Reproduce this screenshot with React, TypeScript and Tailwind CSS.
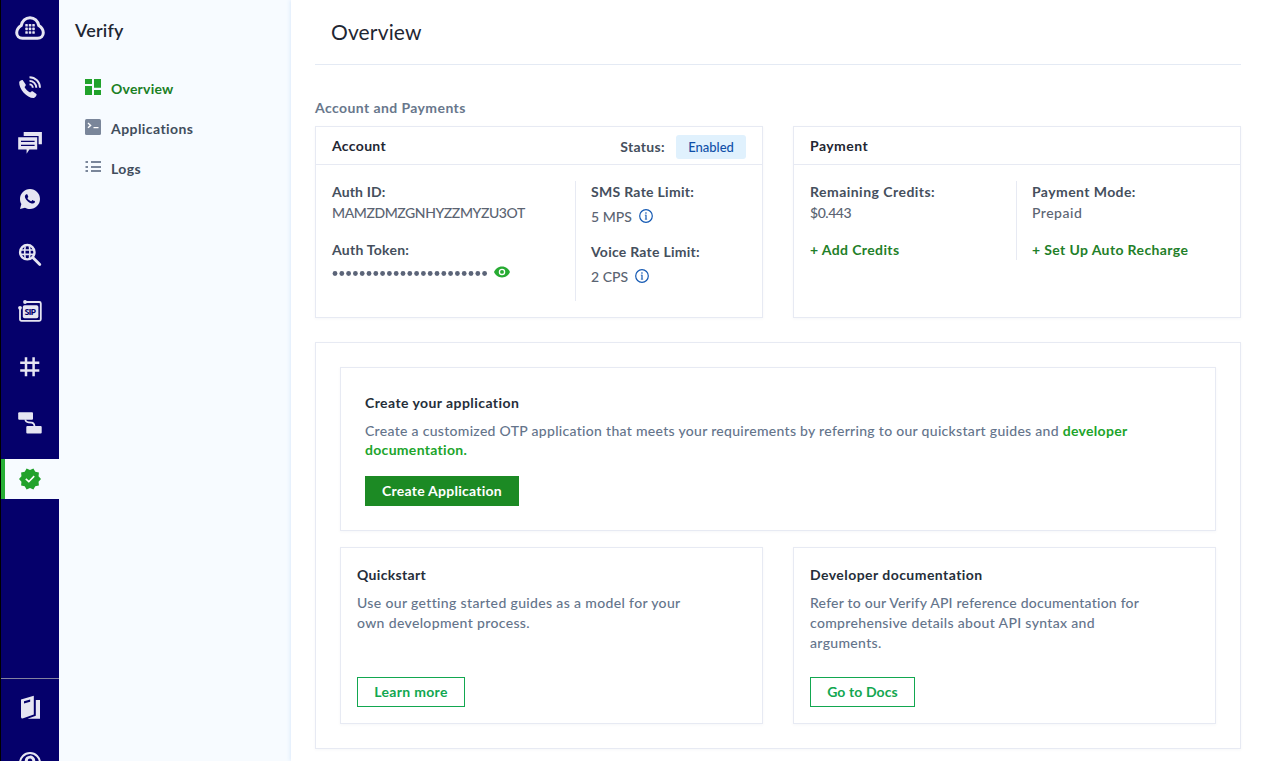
import React from "react";
import { RiWhatsappFill } from "react-icons/ri";

type IconProps = { children: React.ReactNode; active?: boolean };

function RailItem({ children, active }: IconProps) {
  return (
    <a
      className={
        active
          ? "flex h-10 shrink-0 items-center justify-center border-l-4 border-[#27ae35] bg-[#f7fbff] pr-1 text-[#21a22b]"
          : "flex h-10 shrink-0 items-center justify-center text-[#e6e5f2]"
      }
    >
      {children}
    </a>
  );
}

function Glyph({ children }: { children: React.ReactNode }) {
  return (
    <svg width="24" height="24" viewBox="0 0 24 24" fill="none" className="shrink-0">
      {children}
    </svg>
  );
}

function Logo() {
  return (
    <svg width="30" height="24" viewBox="0 0 30 24" fill="none" className="text-[#e6e5f2]">
      <path
        d="M7.5 22.3H22.5C26 22.3 28.3 19.8 28.3 16.8C28.3 14 26.7 11.6 23.8 9.6C22.8 5 19.5 1.7 15 1.7C10.5 1.7 7.2 5 6.2 9.6C3.3 11.6 1.7 14 1.7 16.8C1.7 19.8 4 22.3 7.5 22.3Z"
        stroke="currentColor"
        strokeWidth="3"
      />
      {[8, 11.6, 15.2].map((y) =>
        [10.3, 13.8, 17.3].map((x) => (
          <rect key={`${x}-${y}`} x={x} y={y} width="2.5" height="2.6" rx="0.6" fill="currentColor" />
        )),
      )}
    </svg>
  );
}

function Rail() {
  return (
    <aside className="flex h-full w-[59px] shrink-0 flex-col border-l border-black bg-[#05006b]">
      <div className="flex h-[67px] shrink-0 justify-center pt-4">
        <Logo />
      </div>
      <nav className="flex flex-col gap-4">
        <RailItem>
          <Glyph>
            <path
              d="M1.2 7.2C1.6 5.8 3.8 4.6 4.8 5.2L7.7 9.6C8.1 10.4 7.3 11.4 6.5 12C7.8 14.5 9.8 16.5 12.2 17.5C12.9 16.7 13.8 16 14.6 16.3L18.4 19C19.2 20 17.4 22.6 15.8 23C9 23.2 0.8 14 1.2 7.2Z"
              fill="currentColor"
            />
            <path
              d="M11.5 2.2A10.5 10.5 0 0 1 22 12.7M11.5 5.9A6.8 6.8 0 0 1 18.3 12.7M11.5 9.4A3.3 3.3 0 0 1 14.8 12.7"
              stroke="currentColor"
              strokeWidth="1.9"
            />
          </Glyph>
        </RailItem>
        <RailItem>
          <Glyph>
            <path d="M5.7 1H23.9V13.2H20.6V4.9H5.7Z" fill="currentColor" />
            <path d="M0.2 6.2H19.2V18.6H11.4L8.6 22.8V18.6H0.2Z" fill="currentColor" />
            <path d="M3 10.4H16.6M3 14.3H16.6" stroke="#05006b" strokeWidth="1.3" />
          </Glyph>
        </RailItem>
        <RailItem>
          <RiWhatsappFill size={24} />
        </RailItem>
        <RailItem>
          <Glyph>
            <circle cx="9.3" cy="9.2" r="7.2" stroke="currentColor" strokeWidth="2.4" />
            <path d="M7.2 3.4Q6.2 9.2 7.2 15M11.4 3.4Q12.4 9.2 11.4 15M3 7H15.6M3 11.4H15.6" stroke="currentColor" strokeWidth="1.6" />
            <path d="M14.8 14.6L21.8 21.6" stroke="currentColor" strokeWidth="2.8" strokeLinecap="round" />
          </Glyph>
        </RailItem>
        <RailItem>
          <Glyph>
            <path d="M7 3H21.3Q22.8 3 22.8 4.5V20.3Q22.8 21.8 21.3 21.8H3.5Q2 21.8 2 20.3V8.5" stroke="currentColor" strokeWidth="1.8" />
            <circle cx="7" cy="3" r="1.9" fill="currentColor" />
            <circle cx="2" cy="8.8" r="1.9" fill="currentColor" />
            <rect x="4.8" y="6.3" width="15.6" height="13" rx="1.8" fill="currentColor" />
            <text
              x="12.6"
              y="16"
              textAnchor="middle"
              textLength="12"
              fontSize="9"
              fontWeight="700"
              fill="#05006b"
              className="font-['Open_Sans',sans-serif]"
            >
              SIP
            </text>
          </Glyph>
        </RailItem>
        <RailItem>
          <Glyph>
            <path d="M8 2.2V21.2M15.6 2.2V21.2M2.2 7.8H21.3M2.2 15.6H21.3" stroke="currentColor" strokeWidth="2.5" />
          </Glyph>
        </RailItem>
        <RailItem>
          <Glyph>
            <rect x="0.2" y="1.3" width="14.8" height="7.4" rx="1" fill="currentColor" />
            <rect x="8.3" y="15" width="15.4" height="7.4" rx="1" fill="currentColor" />
            <path d="M7.3 8.5Q7.6 11.2 10.5 11.4L13.5 11.6Q16.2 11.8 16.5 15" stroke="currentColor" strokeWidth="1.7" />
          </Glyph>
        </RailItem>
        <RailItem active>
          <Glyph>
            <path
              d="M23 12l-2.44-2.79.34-3.69-3.61-.82-1.89-3.2L12 2.96 8.6 1.5 6.71 4.69 3.1 5.5l.34 3.7L1 12l2.44 2.79-.34 3.7 3.61.82L8.6 22.5l3.4-1.47 3.4 1.46 1.89-3.19 3.61-.82-.34-3.69L23 12z"
              fill="currentColor"
            />
            <path d="M7.8 11.9L10.8 14.7L16.2 9.1" stroke="#fff" strokeWidth="1.6" />
          </Glyph>
        </RailItem>
      </nav>
      <div className="mt-auto flex h-[83px] shrink-0 flex-col gap-4 overflow-hidden border-t border-[#83829f] pt-2">
        <RailItem>
          <Glyph>
            <path d="M3 4.5L15.8 0.8V19.6L4.5 23.6Q3 23.6 3 22Z" fill="currentColor" />
            <path d="M17.8 5H22V23.7H9.5L17.8 20.8Z" fill="currentColor" />
            <path d="M6 6.2L12.2 4.4V6.8L6 8.6Z" fill="#05006b" />
          </Glyph>
        </RailItem>
        <RailItem>
          <Glyph>
            <circle cx="12" cy="12" r="10" stroke="currentColor" strokeWidth="2" />
            <path d="M8.2 10.2C8.2 4.8 15.8 4.8 15.8 10C15.8 12.6 12 12.8 12 16" stroke="currentColor" strokeWidth="3" />
            <circle cx="12" cy="18.6" r="1.4" fill="currentColor" />
          </Glyph>
        </RailItem>
      </div>
    </aside>
  );
}

function SideMenu() {
  return (
    <aside className="h-full w-[232px] shrink-0 bg-[#f7fbff] pt-[18px]">
      <h1 className="pl-4 text-[18px] leading-6 font-semibold tracking-[0.2px] text-[#1f2733]">Verify</h1>
      <ul className="mt-[27px] pl-[26px] font-bold tracking-[0.43px] text-[#414d5c]">
        <li className="flex h-10 items-center gap-2.5 tracking-[0.22px] text-[#1b8025]">
          <svg width="16" height="16" viewBox="0 0 16 16" fill="#21a22b" className="-mt-1">
            <path d="M0 0H7V5H0ZM9 0H16V8.8H9ZM0 7H7V16H0ZM9 11H16V16H9Z" />
          </svg>
          Overview
        </li>
        <li className="flex h-10 items-center gap-2.5">
          <svg width="16" height="16" viewBox="0 0 16 16" className="-mt-1">
            <rect width="16" height="16" rx="1.5" fill="#7a869a" />
            <path d="M3 4L5.6 6.4L3 8.8M8.5 8.6H13.5" stroke="#fff" strokeWidth="1.4" fill="none" />
          </svg>
          Applications
        </li>
        <li className="flex h-10 items-center gap-2.5">
          <svg width="16" height="16" viewBox="0 0 16 16" fill="#7a869a" className="-mt-1">
            <path d="M0.5 2H3V4H0.5ZM6 2H16V4H6ZM0.5 7H3V9H0.5ZM6 7H16V9H6ZM0.5 11H3V13H0.5ZM6 11H16V13H6Z" />
          </svg>
          Logs
        </li>
      </ul>
    </aside>
  );
}

function InfoIcon() {
  return (
    <svg width="14" height="14" viewBox="0 0 14 14" fill="none" className="-mt-0.5">
      <circle cx="7" cy="7" r="6.3" stroke="#1459b3" strokeWidth="1.2" />
      <path d="M7 5.8V10.4" stroke="#1459b3" strokeWidth="1.2" />
      <path d="M5.8 6.2H7M5.8 10.2H8.2" stroke="#1459b3" strokeWidth="0.6" />
      <rect x="6.3" y="3.3" width="1.3" height="1.4" fill="#1459b3" />
    </svg>
  );
}

function Eye() {
  return (
    <svg width="16" height="12" viewBox="0 0 16 12">
      <path d="M8 0.4C12 0.4 14.8 3 16 6C14.8 9 12 11.4 8 11.4C4 11.4 1.2 9 0 6C1.2 3 4 0.4 8 0.4Z" fill="#27ab32" />
      <circle cx="8" cy="5.9" r="2.6" fill="none" stroke="#fff" strokeWidth="1.3" />
    </svg>
  );
}

const card = "border border-[#e7eaf3] bg-white shadow-[0_1px_3px_rgba(30,50,90,0.04)]";
const label = "font-bold text-[#454f5d]";

export default function App() {
  return (
    <div className="flex h-[761px] w-[1263px] overflow-hidden bg-white font-['Lato',sans-serif] text-[14px] leading-5 tracking-[0.33px] text-[#5b6472]">
      <Rail />
      <SideMenu />
      <main className="min-w-0 flex-1 bg-white pr-[22px] pl-6 shadow-[-1px_0_4px_#dcebfb]">
        <header className="h-[65px] border-b border-[#e4eaf4] pt-[18px] pl-4">
          <h2 className="text-[21px] leading-7 tracking-[0.15px] text-[#1f2733]">Overview</h2>
        </header>
        <h3 className="mt-[33px] leading-5 font-bold tracking-[0.41px] text-[#68778c]">Account and Payments</h3>

        <section className="mt-2 grid grid-cols-2 gap-[30px]">
          <div className={`h-[192px] ${card}`}>
            <div className="flex h-[38px] items-center border-b border-[#e7eaf3] px-4">
              <h4 className="font-bold text-[#1f2733]">Account</h4>
              <span className="mt-[3px] ml-auto font-bold text-[#454f5d]">Status:</span>
              <span className="mt-[3px] ml-[11px] flex h-6 w-[70px] items-center justify-center rounded-[3px] bg-[#e0f1fd] text-[13px] font-medium tracking-normal text-[#0f4fa8]">
                Enabled
              </span>
            </div>
            <div className="flex pt-4 pl-4">
              <div className="w-[243px]">
                <p className={`mt-px tracking-[0.15px] ${label}`}>Auth ID:</p>
                <p className="mt-px font-medium tracking-[-0.42px]">MAMZDMZGNHYZZMYZU3OT</p>
                <p className={`mt-[17px] tracking-[0.25px] ${label}`}>Auth Token:</p>
                <div className="mt-[5px] flex items-center gap-[6px]">
                  <svg width="156" height="14" viewBox="0 0 156 14" fill="#5b6478">
                    {Array.from({ length: 23 }, (_, i) => (
                      <circle key={i} cx={3 + i * 6.8} cy="8.5" r="2.4" />
                    ))}
                  </svg>
                  <Eye />
                </div>
              </div>
              <div className="h-[120px] border-l border-[#e7eaf3] pl-[15px]">
                <p className={`mt-px tracking-[0.29px] ${label}`}>SMS Rate Limit:</p>
                <p className="mt-[5px] flex items-center gap-[7px] font-medium tracking-normal">
                  5 MPS <InfoIcon />
                </p>
                <p className={`mt-[15px] tracking-[0.25px] ${label}`}>Voice Rate Limit:</p>
                <p className="mt-[5px] flex items-center gap-[7px] font-medium tracking-normal">
                  2 CPS <InfoIcon />
                </p>
              </div>
            </div>
          </div>

          <div className={`h-[192px] ${card}`}>
            <div className="flex h-[38px] items-center border-b border-[#e7eaf3] px-4">
              <h4 className="font-bold tracking-[0.45px] text-[#1f2733]">Payment</h4>
            </div>
            <div className="flex pt-4 pl-4">
              <div className="w-[206px]">
                <p className={`mt-px tracking-[0.47px] ${label}`}>Remaining Credits:</p>
                <p className="mt-px font-medium tracking-[-0.45px]">$0.443</p>
                <p className="mt-[17px] font-bold tracking-[0.38px] text-[#1f8029]">+ Add Credits</p>
              </div>
              <div className="h-[79px] border-l border-[#e7eaf3] pl-[15px]">
                <p className={`mt-px tracking-[0.42px] ${label}`}>Payment Mode:</p>
                <p className="mt-px font-medium tracking-[0.5px]">Prepaid</p>
                <p className="mt-[17px] font-bold tracking-[0.38px] text-[#1f8029]">+ Set Up Auto Recharge</p>
              </div>
            </div>
          </div>
        </section>

        <section className={`mt-6 h-[407px] px-6 pt-6 ${card}`}>
          <div className={`h-[164px] px-6 pt-[25px] ${card}`}>
            <h4 className="font-bold tracking-[0.43px] text-[#252e3a]">Create your application</h4>
            <p className="mt-2 leading-[19px] font-medium tracking-[0.3px] text-[#64748b]">
              Create a customized OTP application that meets your requirements by referring to our quickstart guides and{" "}
              <span className="font-bold text-[#20a42b]">
                developer
                <br />
                documentation.
              </span>
            </p>
            <button className="mt-[17px] h-[30px] w-[154px] bg-[#1c8a24] font-bold tracking-[0.25px] text-white">Create Application</button>
          </div>
          <div className="mt-4 grid grid-cols-2 gap-[30px]">
            <div className={`flex h-[177px] flex-col px-4 pt-[17px] pb-4 ${card}`}>
              <h4 className="font-bold text-[#252e3a]">Quickstart</h4>
              <p className="mt-2 font-medium tracking-[0.35px] text-[#64748b]">
                Use our getting started guides as a model for your
                <br />
                own development process.
              </p>
              <button className="mt-auto h-[30px] w-[108px] shrink-0 border border-[#12a750] font-bold text-[#12a750]">Learn more</button>
            </div>
            <div className={`flex h-[177px] flex-col px-4 pt-[17px] pb-4 ${card}`}>
              <h4 className="font-bold tracking-[0.45px] text-[#252e3a]">Developer documentation</h4>
              <p className="mt-2 font-medium text-[#64748b]">
                <span className="tracking-[0.22px]">Refer to our Verify API reference documentation for</span>
                <br />
                comprehensive details about API syntax and
                <br />
                arguments.
              </p>
              <button className="mt-auto h-[30px] w-[105px] shrink-0 border border-[#12a750] font-bold tracking-[0.1px] text-[#12a750]">
                Go to Docs
              </button>
            </div>
          </div>
        </section>
      </main>
    </div>
  );
}
